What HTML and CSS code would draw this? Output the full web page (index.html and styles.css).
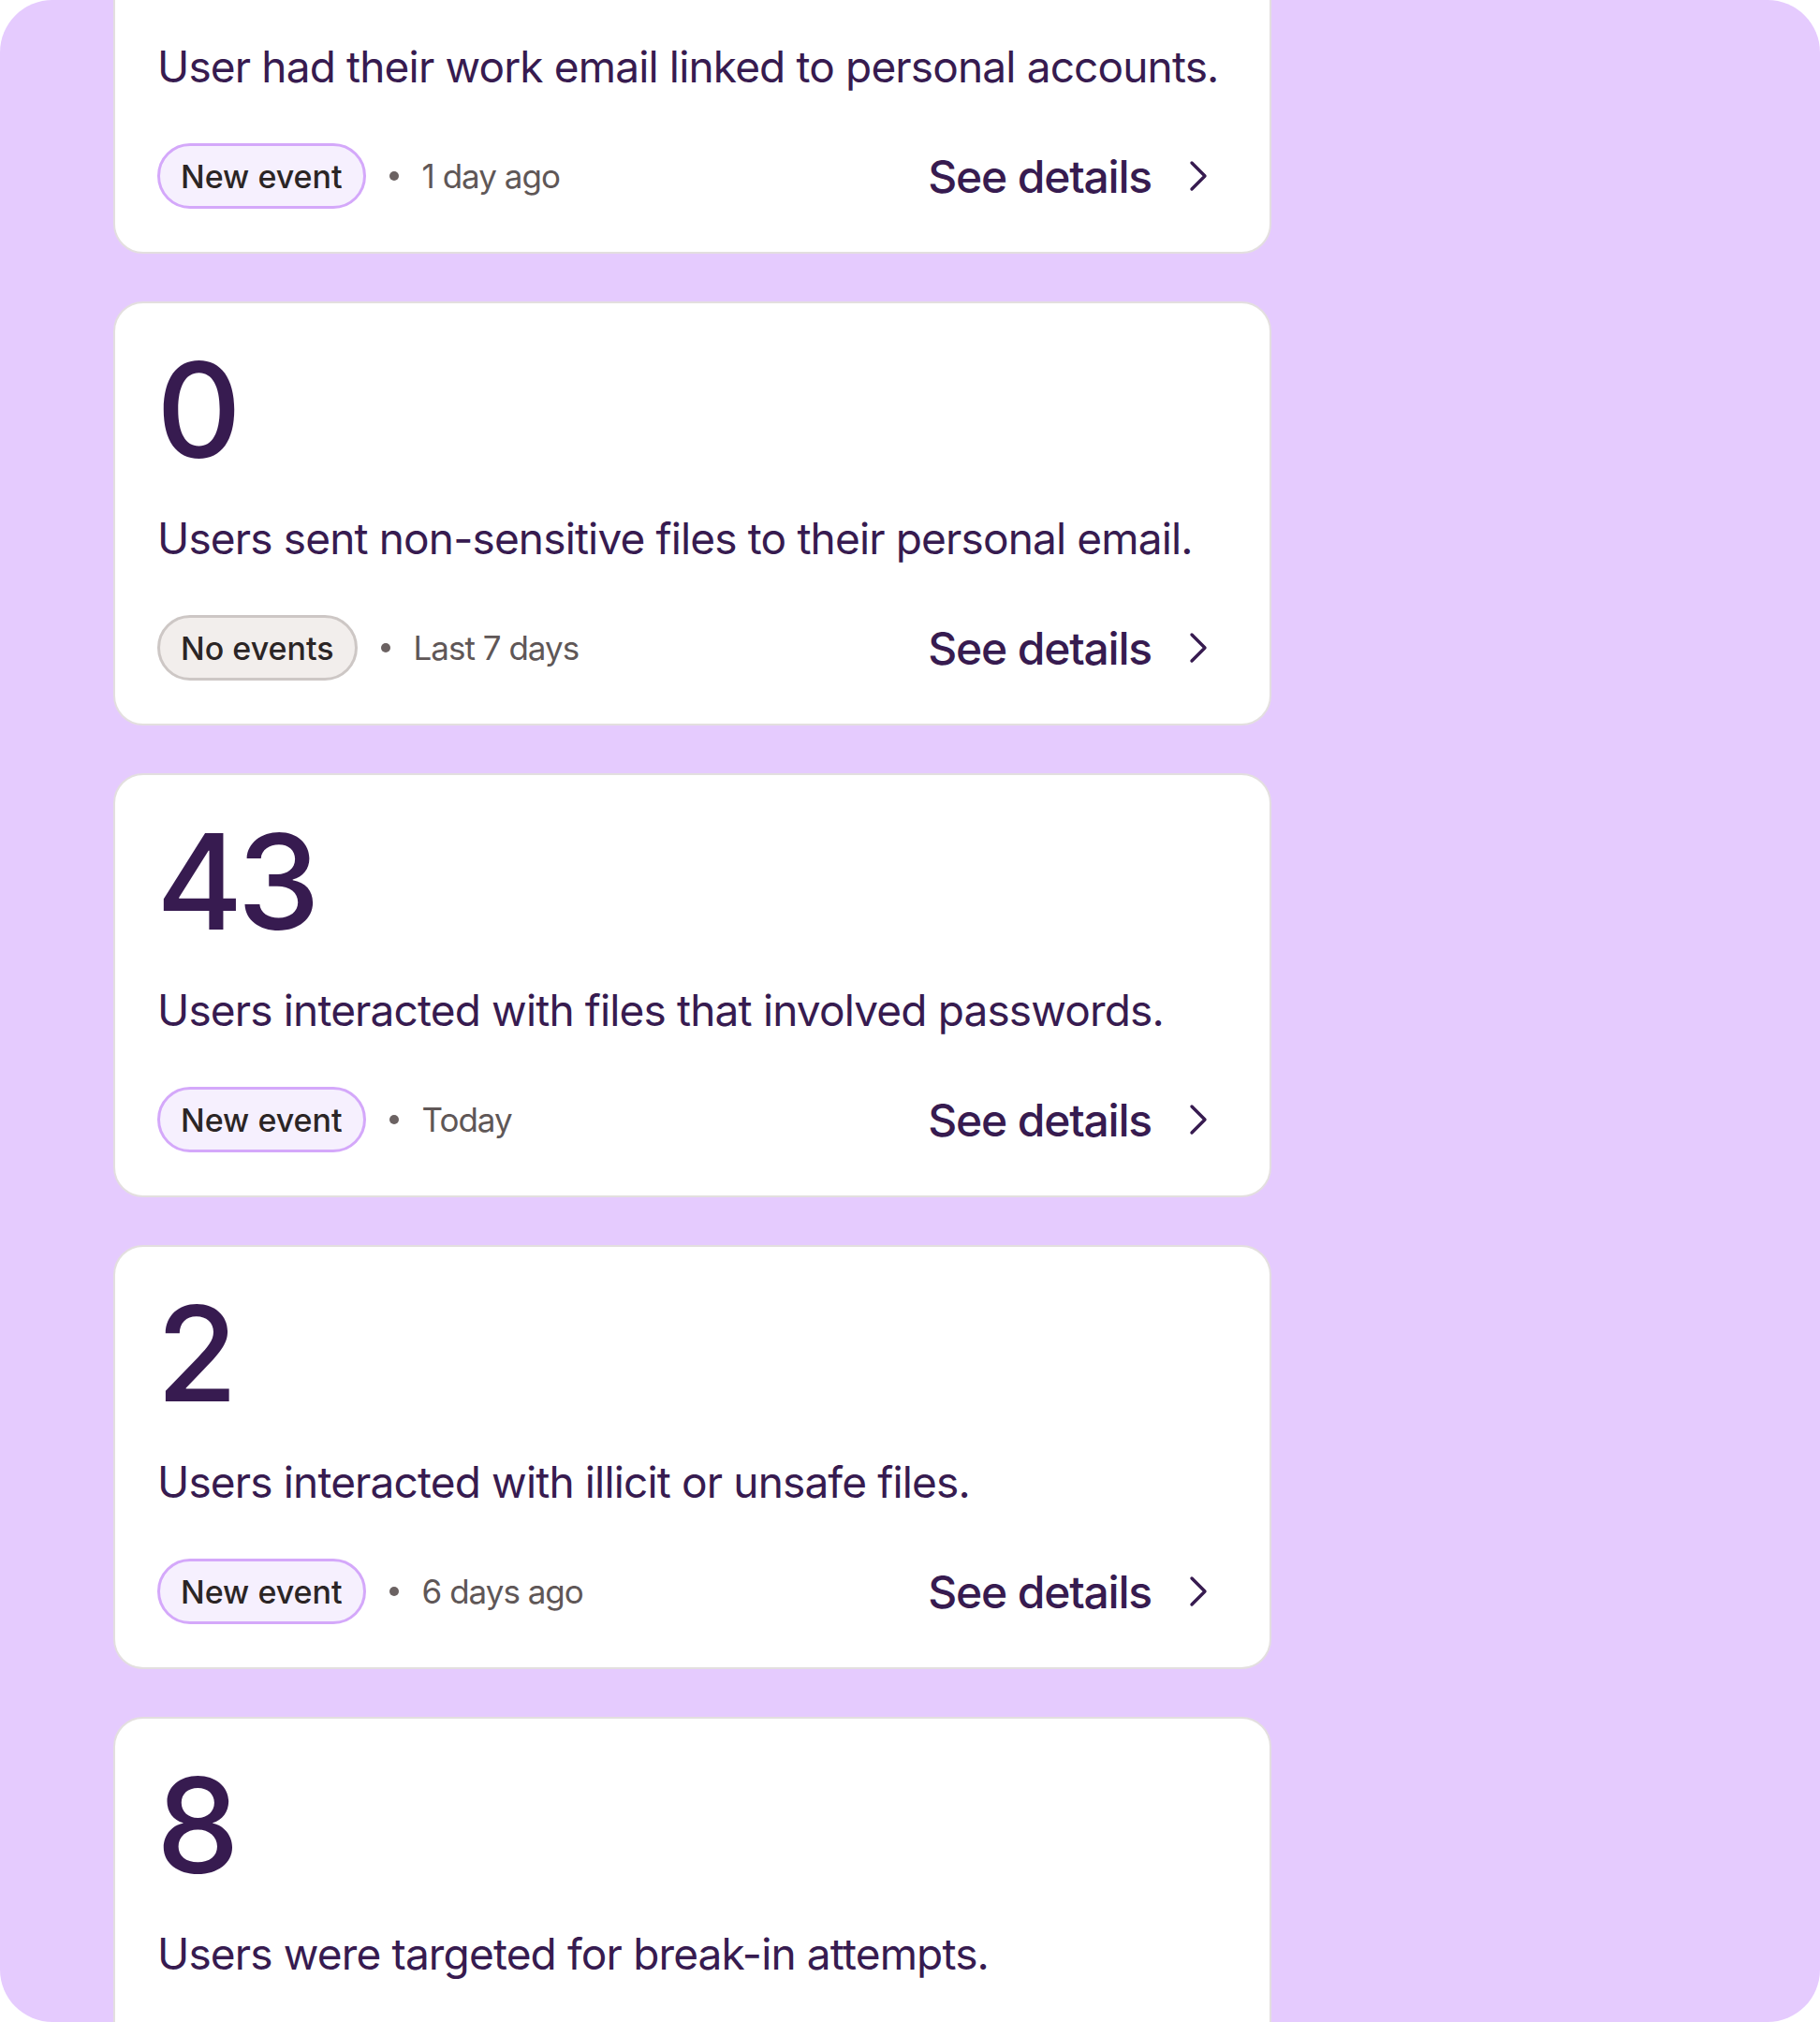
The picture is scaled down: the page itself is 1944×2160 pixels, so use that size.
FILE: index.html
```html
<!DOCTYPE html>
<html lang="en">
<head>
<meta charset="utf-8">
<title>Events</title>
<link rel="stylesheet" href="styles.css">
</head>
<body>
<div class="page">
  <div class="list">
    <div class="card">
      <div class="count">5</div>
      <p class="desc">User had their work email linked to personal accounts.</p>
      <div class="foot">
        <span class="badge badge-new">New event</span>
        <span class="dot"></span>
        <span class="meta">1 day ago</span>
        <a class="details" href="#">See details
          <svg class="chev" viewBox="0 0 20 34" width="20" height="34"><path d="M3 3 L17 17 L3 31" fill="none" stroke="currentColor" stroke-width="3.4" stroke-linecap="round" stroke-linejoin="round"/></svg>
        </a>
      </div>
    </div>
    <div class="card">
      <div class="count">0</div>
      <p class="desc">Users sent non-sensitive files to their personal email.</p>
      <div class="foot">
        <span class="badge badge-none">No events</span>
        <span class="dot"></span>
        <span class="meta">Last 7 days</span>
        <a class="details" href="#">See details
          <svg class="chev" viewBox="0 0 20 34" width="20" height="34"><path d="M3 3 L17 17 L3 31" fill="none" stroke="currentColor" stroke-width="3.4" stroke-linecap="round" stroke-linejoin="round"/></svg>
        </a>
      </div>
    </div>
    <div class="card">
      <div class="count">43</div>
      <p class="desc">Users interacted with files that involved passwords.</p>
      <div class="foot">
        <span class="badge badge-new">New event</span>
        <span class="dot"></span>
        <span class="meta">Today</span>
        <a class="details" href="#">See details
          <svg class="chev" viewBox="0 0 20 34" width="20" height="34"><path d="M3 3 L17 17 L3 31" fill="none" stroke="currentColor" stroke-width="3.4" stroke-linecap="round" stroke-linejoin="round"/></svg>
        </a>
      </div>
    </div>
    <div class="card">
      <div class="count">2</div>
      <p class="desc">Users interacted with illicit or unsafe files.</p>
      <div class="foot">
        <span class="badge badge-new">New event</span>
        <span class="dot"></span>
        <span class="meta">6 days ago</span>
        <a class="details" href="#">See details
          <svg class="chev" viewBox="0 0 20 34" width="20" height="34"><path d="M3 3 L17 17 L3 31" fill="none" stroke="currentColor" stroke-width="3.4" stroke-linecap="round" stroke-linejoin="round"/></svg>
        </a>
      </div>
    </div>
    <div class="card">
      <div class="count">8</div>
      <p class="desc">Users were targeted for break-in attempts.</p>
      <div class="foot">
        <span class="badge badge-new">New event</span>
        <span class="dot"></span>
        <span class="meta">Today</span>
        <a class="details" href="#">See details
          <svg class="chev" viewBox="0 0 20 34" width="20" height="34"><path d="M3 3 L17 17 L3 31" fill="none" stroke="currentColor" stroke-width="3.4" stroke-linecap="round" stroke-linejoin="round"/></svg>
        </a>
      </div>
    </div>
  </div>
</div>
</body>
</html>
```

FILE: styles.css
```css
html, body {
  margin: 0;
  padding: 0;
  background: #ffffff;
}
body {
  font-family: Inter, "Noto Sans", sans-serif;
  color: #371b50;
}
.page {
  width: 1944px;
  height: 2160px;
  background: #e5cbfe;
  border-radius: 56px;
  overflow: hidden;
  box-sizing: border-box;
  padding-left: 121px;
}
.list {
  width: 1237px;
  margin-top: -182px;
  display: flex;
  flex-direction: column;
  gap: 51px;
}
.card {
  box-sizing: border-box;
  height: 453px;
  background: #ffffff;
  border: 2px solid #e3dfdf;
  border-radius: 32px;
  padding: 42px 47px 44px 45px;
  display: flex;
  flex-direction: column;
}
.count {
  font-size: 141px;
  line-height: 143px;
  height: 143px;
  font-weight: 500;
  letter-spacing: -6px;
  margin-left: -1px;
  color: #371b50;
}
.desc {
  margin: 36px 0 0 0;
  font-size: 46px;
  line-height: 60px;
  font-weight: 400;
  letter-spacing: -0.85px;
  white-space: nowrap;
  color: #371b50;
}
.foot {
  margin-top: 52px;
  height: 70px;
  display: flex;
  align-items: center;
}
.badge {
  box-sizing: border-box;
  height: 70px;
  display: inline-flex;
  align-items: center;
  padding: 0 22px;
  border-radius: 35px;
  font-size: 34px;
  font-weight: 500;
  color: #2b2525;
  white-space: nowrap;
}
.badge-new {
  background: #f6f0fe;
  border: 3px solid #d4a8fa;
}
.badge-none {
  background: #f2eeec;
  border: 3px solid #cdc7c5;
}
.dot {
  width: 10px;
  height: 10px;
  border-radius: 50%;
  background: #6b6262;
  margin: 0 25px 0 25px;
}
.meta {
  font-size: 35px;
  letter-spacing: -1px;
  color: #5f5757;
  white-space: nowrap;
}
.details {
  margin-left: auto;
  display: flex;
  align-items: center;
  gap: 40px;
  text-decoration: none;
  color: #371b50;
  font-size: 48px;
  font-weight: 500;
  letter-spacing: -1.2px;
  white-space: nowrap;
}
.chev {
  display: block;
  margin-right: 19px;
}
```
